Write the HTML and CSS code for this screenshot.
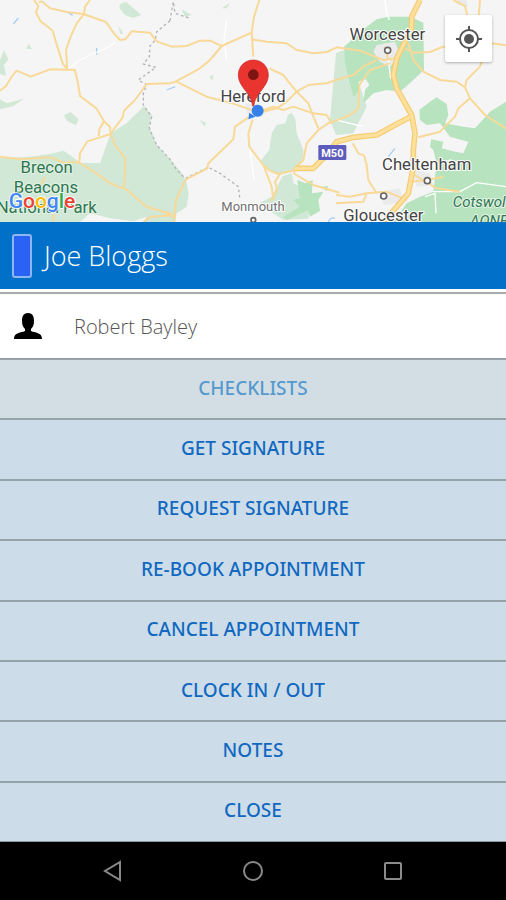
FILE: index.html
```
<!DOCTYPE html>
<html lang="en">
<head>
  <meta charset="UTF-8" />
  <meta name="viewport" content="width=device-width, initial-scale=1.0" />
  <title>Appointment - Joe Bloggs</title>
  <link rel="stylesheet" href="styles.css">
</head>
<body>

  <section class="map">
    <svg class="map-canvas" viewBox="0 0 1518 666" preserveAspectRatio="xMidYMid slice" role="img" aria-label="Map of Hereford">
      <!-- parks and woodland -->
      <g class="park">
        <path d="M0 475L90 470L150 462L190 452L210 465L240 488L300 490L332 400L380 370L432 318L455 345L448 380L470 435L510 478L545 518L560 550L566 580L560 620L530 640L526 666H430L440 650L400 664L330 655L270 640L240 666H0Z" />
        <path d="M0 180L12 150L25 178L12 195L18 228L0 222ZM0 298L20 310L72 296L40 318L0 328ZM192 346L212 336L236 358L228 376L200 362ZM360 12L378 6L424 44L400 54L376 46L358 24ZM78 146L86 132L96 148ZM356 78L370 100L360 102Z" />
        <path d="M864 345L875 338L886 356L890 400L910 450L908 485L880 515L840 524L800 508L782 482L808 450L815 400L830 375L856 370Z" />
        <path d="M848 528L876 520L880 550L912 565L900 590L930 620L925 656L850 660L805 630L780 608L815 590Z" />
        <path d="M1008 160L1030 150L1070 230L1100 320L1060 400L1008 405L990 360Z" />
        <path d="M665 25L690 8L680 25ZM627 230L640 224L638 242ZM600 360L618 368L614 380ZM545 28L575 45L555 50Z" />
      </g>
      <g class="wood">
        <path d="M1100 80L1130 58L1165 50L1230 50L1270 68L1272 210L1240 240L1200 275L1160 270L1120 280L1090 310L1095 270L1108 255L1098 238L1075 245L1080 270L1060 290L1035 190L1032 140Z" />
        <path d="M1258 330L1290 305L1310 292L1340 312L1345 345L1335 370L1390 380L1425 385L1470 335L1518 305V666H1180L1220 610L1260 590L1300 575L1310 490L1300 450L1290 440L1294 418L1330 425L1325 445L1365 455L1390 460L1405 425L1350 410L1320 370L1280 375L1260 360Z" />
        <path d="M892 540L916 550L938 540L936 580L970 575L955 600L960 632L930 650L925 630L860 660L850 650L900 620L880 600L900 595ZM962 560L984 558L980 574Z" />
      </g>
      <!-- built-up areas -->
      <g class="town">
        <path d="M1130 135L1185 125L1200 165L1170 200L1140 185L1120 155Z" />
        <path d="M1240 510L1290 520L1300 555L1250 560ZM1140 575L1200 565L1210 610L1150 615ZM1370 0L1400 0L1404 20L1375 15Z" />
        <path d="M735 310L785 315L790 350L745 350Z" />
      </g>
      <g class="river">
        <path d="M55 54L40 72M205 38L218 46M290 144V164M500 270L526 260M1185 445L1165 470M985 666Q990 652 1005 654" />
      </g>
      <g class="lane">
        <path d="M345 125L330 138L240 180L205 205M680 60L672 120L680 180M750 450L762 540M1155 0L1160 40L1168 60M1165 180L1172 235M1008 360L1090 380M1275 590L1305 580L1308 640M1300 575L1380 575L1430 548L1518 560M1300 500L1350 480L1380 490" />
      </g>
      <!-- county border -->
      <path class="border" d="M510 62L470 96L466 120L450 138L448 170L430 192L468 202L415 240L440 254L430 280L430 315L455 350L448 385L470 435L510 478L530 510L556 535L625 502L660 520L715 560L720 600M510 62L520 5L525 40L570 55" />
      <g class="road">
        <path d="M102 0L115 18L108 38L122 64L158 92L172 140L188 190L202 208" />
        <path d="M116 8L125 4L150 25L200 36L250 42L318 66L340 98L360 120L376 118L395 94L450 98L470 124L515 140L560 138L600 122L630 122L665 138L755 98L762 50L778 0" />
        <path d="M270 0L255 20L252 42L230 70L212 110L198 150L202 208" />
        <path d="M0 272L18 258L35 230L50 212L92 230L150 208L225 210L234 250L240 288L290 326L312 364L330 380L332 402L300 412L262 424L240 460L238 485" />
        <path d="M312 364L298 388L296 408M332 402L340 390L368 352L372 332L405 300L440 252L510 250L528 244L600 205L630 180L665 138" />
        <path d="M0 470L60 478L150 472L190 488L235 486L290 520L330 550L378 568L440 620L515 642" />
        <path d="M332 402L345 435L376 475L372 568M430 666L450 650L520 646M135 530L120 560M160 640V666" />
        <path d="M528 244L620 290L690 308L760 332M745 352L705 380L700 418L625 490L622 505L558 538L528 600L522 666M495 640L520 650" />
        <path d="M758 360L745 400L748 440L790 495L815 560L820 600M790 495L810 512L835 522L885 510M840 522L825 545L832 570L812 602" />
        <path d="M755 98L760 170M755 118L800 125L860 130L890 150L940 160L980 156L1010 142L1080 152L1150 180L1190 175" />
        <path d="M808 205L850 225L865 245L890 275L925 310L940 350L955 385M890 275L925 255L980 250L1008 240L1060 225L1090 200L1130 180" />
        <path d="M890 275L860 305L830 325L790 335M790 330L820 320L850 330L880 320L940 340L980 345L992 365L955 390L920 430L910 480L880 510L884 522L940 555L1018 578" />
        <path d="M990 370L1008 362L1050 345L1075 325L1078 255L1110 210L1170 190M1155 140L1165 180M1225 130L1240 180L1270 215L1320 240L1370 245L1395 262L1410 295L1455 345L1518 385" />
        <path d="M1410 295L1375 325L1365 350L1320 395L1255 412M1395 262L1400 240L1440 200L1445 185M1215 145L1240 158L1290 156L1330 140L1350 142M1475 130L1518 136M1360 0L1395 18L1405 60M1440 0L1435 60" />
        <path d="M1058 430L1075 460L1092 466L1100 495L1105 540L1130 580M1008 585L1050 590L1100 580L1160 575L1220 600M1008 610L1090 605L1100 580M1235 520L1270 540L1310 565L1380 575M1235 545L1280 540L1330 530" />
      </g>
      <g class="motorway">
        <path id="m50" d="M885 505H940L975 470L1010 425L1060 412L1130 405L1185 375L1232 350" />
        <path id="m5" d="M1260 0L1235 50L1235 85L1210 135L1190 175L1180 225L1190 265L1235 345L1245 400L1240 450V500L1225 580L1195 615L1150 666" />
      </g>
      <g class="motorway-fill">
        <use href="#m50" />
        <use href="#m5" />
      </g>
      <rect class="shield" x="955" y="435" width="84" height="45" rx="4" />
      <text class="shield-label" x="997" y="471">M50</text>

      <g class="stop">
        <circle cx="1163" cy="151" r="9" />
        <circle cx="1282" cy="542" r="9" />
        <circle cx="1151" cy="588" r="9" />
        <circle cx="760" cy="660" r="7" />
      </g>
      <g class="place">
        <text x="759" y="306">Hereford</text>
        <text x="1162" y="120">Worcester</text>
        <text x="1280" y="510">Cheltenham</text>
        <text x="1150" y="662">Gloucester</text>
        <text class="place-small" x="759" y="634">Monmouth</text>
      </g>
      <g class="place place-park">
        <text x="140" y="518">Brecon</text>
        <text x="138" y="580">Beacons</text>
        <text x="140" y="640">National Park</text>
        <text class="place-italic" x="1358" y="621">Cotswolds</text>
        <text class="place-italic" x="1410" y="677">AONB</text>
      </g>

      <!-- current position and marker -->
      <path class="position" d="M748 338L766 350L745 358Z" />
      <circle class="position" cx="773" cy="332" r="18" />
      <path class="marker" d="M760 180C734 180 715 200 715 225C715 262 753 276 758 318H761C767 276 805 262 805 225C805 200 786 180 760 180Z" />
      <circle class="marker-dot" cx="760" cy="224" r="16" />

      <text class="google" x="26" y="625"><tspan class="g-blue">G</tspan><tspan class="g-red">o</tspan><tspan class="g-yellow">o</tspan><tspan class="g-blue">g</tspan><tspan class="g-green">l</tspan><tspan class="g-red">e</tspan></text>
    </svg>
    <button class="locate" type="button" aria-label="My location">
      <svg viewBox="0 0 26 26" width="26" height="26">
        <circle cx="13" cy="13" r="9" />
        <path d="M13 0V5M13 21V26M0 13H5M21 13H26" />
        <circle class="locate-dot" cx="13" cy="13" r="5" />
      </svg>
    </button>
  </section>

  <header class="title-bar">
    <span class="status"></span>
    <h1>Joe Bloggs</h1>
  </header>

  <section class="contact">
    <svg viewBox="0 0 28 26" width="28" height="26" aria-hidden="true">
      <path d="M14 0C9 0 8 4 8 8C8 12 9 14 11 16V18C7 20 0 19 0 26H28C28 19 21 20 17 18V16C19 14 20 12 20 8C20 4 19 0 14 0Z" />
    </svg>
    <span>Robert Bayley</span>
  </section>

  <main class="actions">
    <button type="button" disabled>CHECKLISTS</button>
    <button type="button">GET SIGNATURE</button>
    <button type="button">REQUEST SIGNATURE</button>
    <button type="button">RE-BOOK APPOINTMENT</button>
    <button type="button">CANCEL APPOINTMENT</button>
    <button type="button">CLOCK IN / OUT</button>
    <button type="button">NOTES</button>
    <button type="button">CLOSE</button>
  </main>

  <nav class="system-nav">
    <button type="button" aria-label="Back">
      <svg viewBox="0 0 22 22" width="22" height="22"><path d="M18 2V20L3 11Z" /></svg>
    </button>
    <button type="button" aria-label="Home">
      <svg viewBox="0 0 22 22" width="22" height="22"><circle cx="11" cy="11" r="9" /></svg>
    </button>
    <button type="button" aria-label="Recent apps">
      <svg viewBox="0 0 22 22" width="22" height="22"><rect x="3" y="3" width="16" height="16" rx="1" /></svg>
    </button>
  </nav>

</body>
</html>
```
FILE: styles.css
```
* {
  margin: 0;
  padding: 0;
  box-sizing: border-box;
}

body {
  display: flex;
  flex-direction: column;
  min-height: 100vh;
  background: #fff;
  font-family: "Noto Sans", sans-serif;
}

button {
  border: none;
  font-family: inherit;
  cursor: pointer;
}

/* Map */
.map {
  position: relative;
  height: 222px;
  background: #f5f5f5;
  overflow: hidden;
}

.map-canvas {
  display: block;
  width: 100%;
  height: 100%;
  font-family: Roboto, sans-serif;
}

.park {
  fill: #d0e8d5;
}

.wood {
  fill: #b7e3be;
}

.town {
  fill: #ebebec;
}

.river,
.lane,
.border,
.road,
.motorway,
.motorway-fill {
  fill: none;
  stroke-linejoin: round;
}

.river {
  stroke: #a5d0f5;
  stroke-width: 4;
}

.lane {
  stroke: #fff;
  stroke-width: 4;
}

.border {
  stroke: #b4b4b8;
  stroke-width: 4;
  stroke-dasharray: 8 8;
}

.road {
  stroke: #f8d998;
  stroke-width: 6;
}

.motorway {
  stroke: #f5cb74;
  stroke-width: 17;
}

.motorway-fill {
  stroke: #fde09a;
  stroke-width: 10;
}

.shield {
  fill: #5d5cbd;
}

.shield-label {
  fill: #fff;
  font-size: 33px;
  font-weight: 700;
  text-anchor: middle;
}

.stop {
  fill: #fff;
  stroke: #666;
  stroke-width: 5;
}

.place {
  fill: #444;
  stroke: #fff;
  stroke-width: 6;
  paint-order: stroke;
  font-size: 50px;
  text-anchor: middle;
}

.place-small {
  fill: #707070;
  font-size: 39px;
}

.place-park {
  fill: #2f7650;
  stroke: #e2f2e5;
}

.place-italic {
  font-size: 45px;
  font-style: italic;
  text-anchor: start;
}

.position {
  fill: #3680ea;
}

.marker {
  fill: #e9342f;
  stroke: #c52a26;
  stroke-width: 2;
}

.marker-dot {
  fill: #7d1512;
}

.google {
  font-size: 63px;
  font-weight: 500;
  stroke: #fff;
  stroke-width: 5;
  paint-order: stroke;
}

.g-blue {
  fill: #4285f4;
}

.g-red {
  fill: #ea4335;
}

.g-yellow {
  fill: #fbbc05;
}

.g-green {
  fill: #34a853;
}

.locate {
  position: absolute;
  top: 15px;
  right: 14px;
  display: grid;
  place-items: center;
  width: 47px;
  height: 47px;
  background: #fff;
  border-radius: 2px;
  box-shadow: 0 1px 3px rgba(0, 0, 0, 0.3);
}

.locate svg {
  fill: none;
  stroke: #555;
  stroke-width: 2;
}

.locate .locate-dot {
  fill: #555;
  stroke: none;
}

/* Customer */
.title-bar {
  display: flex;
  align-items: center;
  gap: 12px;
  height: 67px;
  padding: 0 12px;
  background: #0070c9;
  color: #fff;
}

.title-bar h1 {
  font-family: "Open Sans", sans-serif;
  font-size: 27px;
  font-weight: 300;
}

.status {
  width: 20px;
  height: 44px;
  background: #2962f5;
  border: 2px solid #8fb5f5;
  border-radius: 3px;
}

.contact {
  display: flex;
  align-items: center;
  gap: 32px;
  height: 66px;
  margin-top: 3px;
  padding: 0 14px;
  border-top: 2px solid #aaa;
  color: #555;
  font-family: "Open Sans", sans-serif;
  font-size: 20px;
  font-weight: 300;
}

/* Actions */
.actions {
  flex: 1;
  display: grid;
  grid-auto-rows: 1fr;
  border-bottom: 1px solid #8b979f;
}

.actions button {
  min-height: 48px;
  padding-bottom: 3px;
  background: #ccdde9;
  border-top: 2px solid #96a2aa;
  color: #1168c0;
  font-size: 19px;
  font-weight: 500;
}

.actions button:disabled {
  background: #d2dee4;
  color: #5599cf;
  cursor: default;
}

/* Android navigation bar */
.system-nav {
  display: flex;
  justify-content: center;
  gap: 92px;
  height: 58px;
  background: #000;
}

.system-nav button {
  width: 48px;
  background: none;
}

.system-nav svg {
  display: block;
  margin: auto;
  fill: none;
  stroke: #8a8a8a;
  stroke-width: 2;
}
```
